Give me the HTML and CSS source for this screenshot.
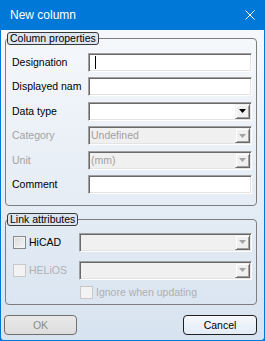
FILE: index.html
```html
<!DOCTYPE html>
<html>
<head>
<meta charset="utf-8">
<link rel="stylesheet" href="styles.css">
</head>
<body>
<div class="window">
  <div class="titlebar">
    <span class="title">New column</span>
    <svg class="close" width="10" height="10" viewBox="0 0 10 10"><path d="M0.5 0.5 L9.5 9.5 M9.5 0.5 L0.5 9.5" stroke="#fff" stroke-width="1" fill="none"/></svg>
  </div>
  <div class="content">
    <fieldset class="group group-props">
      <legend>Column properties</legend>
      <div class="form">
        <span class="lbl">Designation</span>
        <div class="field"><span class="caret"></span></div>
        <span class="lbl">Displayed nam</span>
        <div class="field"></div>
        <span class="lbl">Data type</span>
        <div class="field combo"><span class="val"></span><span class="dd"><svg width="7" height="4" viewBox="0 0 7 4"><path d="M0 0 H7 L3.5 4 Z" fill="#000"/></svg></span></div>
        <span class="lbl dis">Category</span>
        <div class="field combo disabled"><span class="val">Undefined</span><span class="dd"><svg width="7" height="4" viewBox="0 0 7 4"><path d="M0 0 H7 L3.5 4 Z" fill="#a3a3a3"/></svg></span></div>
        <span class="lbl dis">Unit</span>
        <div class="field combo disabled"><span class="val">(mm)</span><span class="dd"><svg width="7" height="4" viewBox="0 0 7 4"><path d="M0 0 H7 L3.5 4 Z" fill="#a3a3a3"/></svg></span></div>
        <span class="lbl">Comment</span>
        <div class="field"></div>
      </div>
    </fieldset>
    <fieldset class="group group-link">
      <legend>Link attributes</legend>
      <div class="links">
        <div class="lrow">
          <div class="check"><span class="box"></span><span class="ctext">HiCAD</span></div>
          <div class="field combo disabled"><span class="val"></span><span class="dd"><svg width="7" height="4" viewBox="0 0 7 4"><path d="M0 0 H7 L3.5 4 Z" fill="#a3a3a3"/></svg></span></div>
        </div>
        <div class="lrow">
          <div class="check dis"><span class="box"></span><span class="ctext">HELiOS</span></div>
          <div class="field combo disabled"><span class="val"></span><span class="dd"><svg width="7" height="4" viewBox="0 0 7 4"><path d="M0 0 H7 L3.5 4 Z" fill="#a3a3a3"/></svg></span></div>
        </div>
        <div class="lrow lrow-ignore">
          <div class="check dis"><span class="box"></span><span class="ctext">Ignore when updating</span></div>
        </div>
      </div>
    </fieldset>
    <div class="buttons">
      <button class="btn btn-ok">OK</button>
      <button class="btn btn-cancel">Cancel</button>
    </div>
  </div>
</div>
</body>
</html>
```
FILE: styles.css
```css
* { box-sizing: border-box; }
html, body { margin: 0; padding: 0; }
body {
  width: 265px;
  height: 341px;
  overflow: hidden;
  background: #0078d7;
  font-family: "Liberation Sans", Arial, sans-serif;
}
.window {
  width: 265px;
  height: 341px;
  display: flex;
  flex-direction: column;
  background: #0078d7;
  padding: 0 1px 1px;
}
.titlebar {
  height: 30px;
  flex: none;
  display: flex;
  align-items: center;
  justify-content: space-between;
  padding: 0 9px;
  color: #fff;
  font-size: 12px;
}
.title { line-height: 14px; }
.close { display: block; }
.content {
  flex: 1;
  display: flex;
  flex-direction: column;
  background: linear-gradient(#f6f8fb, #d7e3f0);
  border-radius: 0 0 3px 3px;
  padding-top: 2px;
  font-size: 10.5px;
  color: #000;
}
.group {
  margin: 0 7px 0 4px;
  padding: 0 4px 11px 1px;
  border: 1px solid #7d7d7d;
  border-radius: 4px;
  min-width: 0;
}
.group legend {
  margin: 0;
  padding: 0 2px;
  height: 13px;
  line-height: 11px;
  border: 1px solid #3a3a3a;
  border-radius: 3px;
  background: #dbe6f2;
  font-size: 10.5px;
  color: #000;
}
.form {
  margin-top: 8px;
  padding-left: 5px;
  display: grid;
  grid-template-columns: 76px 1fr;
  grid-auto-rows: 19px;
  row-gap: 5.4px;
}
.lbl {
  line-height: 19px;
  white-space: nowrap;
  overflow: hidden;
}
.lbl.dis { color: #a3a3a3; }
.field {
  height: 19px;
  display: flex;
  align-items: center;
  background: #fff;
  border: 1px solid;
  border-color: #a0a0a0 #fff #fff #a0a0a0;
  box-shadow: inset 1px 1px 0 #696969, inset -1px -1px 0 #e3e3e3;
  padding: 1px;
}
.caret {
  display: block;
  width: 1px;
  height: 13px;
  margin-left: 5px;
  background: #000;
}
.combo .val {
  flex: 1;
  padding-left: 1px;
  line-height: 15px;
  white-space: nowrap;
}
.field.disabled { background: #f0f0f0; }
.field.disabled .val { color: #a0a0a0; }
.dd {
  width: 15px;
  height: 15px;
  flex: none;
  display: flex;
  align-items: center;
  justify-content: center;
  background: #f0f0f0;
  border: 1px solid;
  border-color: #f0f0f0 #696969 #696969 #f0f0f0;
  box-shadow: inset 1px 1px 0 #fff, inset -1px -1px 0 #a0a0a0;
}
.dd svg { display: block; }
.group-link {
  margin-top: 7px;
  padding-bottom: 5px;
}
.links {
  margin-top: 7px;
  padding-left: 6px;
  display: flex;
  flex-direction: column;
  gap: 9px;
}
.lrow {
  display: flex;
  align-items: center;
  height: 19px;
}
.lrow-ignore {
  height: 13px;
  margin-top: -3px;
  padding-left: 67px;
}
.lrow .field { flex: 1; }
.check {
  width: 66px;
  flex: none;
  display: flex;
  align-items: center;
  gap: 3px;
  white-space: nowrap;
}
.lrow-ignore .check { width: auto; }
.box {
  width: 13px;
  height: 13px;
  flex: none;
  border: 1px solid #8a8a8a;
  background: linear-gradient(135deg, #d9d9d9, #f7f7f7);
  box-shadow: inset 0 0 0 1px #f2f2f2;
}
.ctext { line-height: 13px; }
.check.dis .ctext { color: #b0b0b0; }
.check.dis .box {
  border-color: #c8c8c8;
  background: #f3f3f3;
  box-shadow: none;
}
.buttons {
  margin-top: 10px;
  padding: 0 7px 0 3px;
  display: flex;
  justify-content: space-between;
}
.btn {
  height: 20px;
  border-radius: 4px;
  font-family: "Liberation Sans", Arial, sans-serif;
  font-size: 10.5px;
  padding: 0;
}
.btn-ok {
  width: 73px;
  border: 1px solid #707070;
  background: linear-gradient(#e9e9e9, #dddddd);
  color: #8a8a8a;
}
.btn-cancel {
  width: 74px;
  border: 1px solid #202020;
  background: linear-gradient(#f5f8fc, #e4ecf7);
  color: #000;
}
```
